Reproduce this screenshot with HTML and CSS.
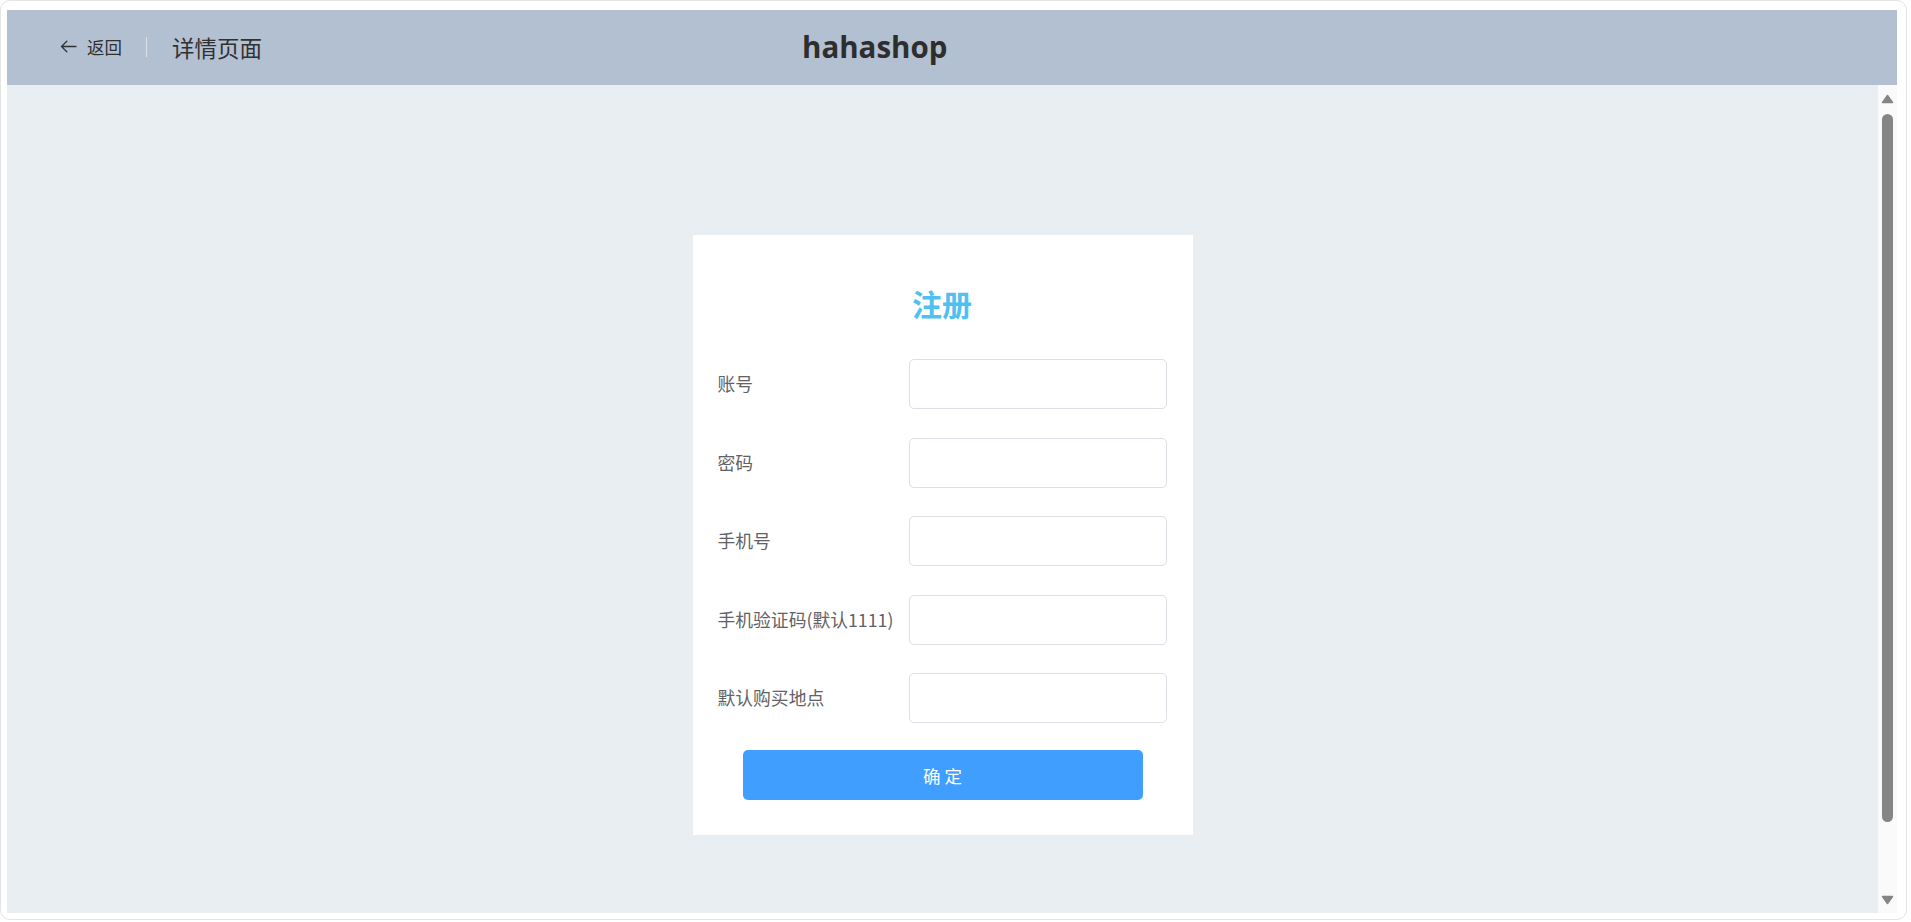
FILE: index.html
```html
<!DOCTYPE html>
<html lang="zh-CN">
<head>
<meta charset="utf-8">
<title>hahashop - 注册</title>
<link rel="stylesheet" href="styles.css">
</head>
<body>
<div class="frame">
  <div class="app">
    <header class="topbar">
      <div class="page-header">
        <div class="back">
          <svg class="back-icon" width="17" height="13" viewBox="0 0 17 13" aria-hidden="true">
            <path d="M16 6.5H1.5M6.8 1.2L1.5 6.5l5.3 5.3" fill="none" stroke="#303133" stroke-width="1.3" stroke-linecap="round" stroke-linejoin="round"/>
          </svg>
          <span class="back-text">返回</span>
        </div>
        <div class="page-title">详情页面</div>
      </div>
      <h1 class="brand">hahashop</h1>
    </header>
    <div class="body">
      <main class="main">
        <section class="card">
          <h2 class="card-title">注册</h2>
          <form class="form">
            <div class="form-item">
              <label class="form-label">账号</label>
              <input class="form-input" type="text">
            </div>
            <div class="form-item">
              <label class="form-label">密码</label>
              <input class="form-input" type="password">
            </div>
            <div class="form-item">
              <label class="form-label">手机号</label>
              <input class="form-input" type="text">
            </div>
            <div class="form-item">
              <label class="form-label">手机验证码(默认1111)</label>
              <input class="form-input" type="text">
            </div>
            <div class="form-item">
              <label class="form-label">默认购买地点</label>
              <input class="form-input" type="text">
            </div>
            <button class="submit" type="button">确 定</button>
          </form>
        </section>
      </main>
      <div class="scrollbar" aria-hidden="true">
        <div class="sb-btn sb-up">
          <svg width="13" height="10" viewBox="0 0 13 10"><path d="M6.5 1.5L11.5 8.5H1.5Z" fill="#858585" stroke="#858585" stroke-width="1.5" stroke-linejoin="round"/></svg>
        </div>
        <div class="sb-track">
          <div class="sb-thumb"></div>
        </div>
        <div class="sb-btn sb-down">
          <svg width="13" height="10" viewBox="0 0 13 10"><path d="M6.5 8.5L11.5 1.5H1.5Z" fill="#858585" stroke="#858585" stroke-width="1.5" stroke-linejoin="round"/></svg>
        </div>
      </div>
    </div>
  </div>
</div>
</body>
</html>
```

FILE: styles.css
```css
* {
  box-sizing: border-box;
}

html, body {
  margin: 0;
  padding: 0;
  background: #ffffff;
  font-family: "Noto Sans CJK SC", "Noto Sans", sans-serif;
}

.frame {
  width: 1907px;
  height: 920px;
  border: 1px solid #e4e4e4;
  border-radius: 10px;
  padding: 9px 9px 6px 6px;
  overflow: hidden;
}

.app {
  width: 1890px;
  height: 903px;
  display: flex;
  flex-direction: column;
}

.topbar {
  height: 75px;
  flex: none;
  background: #b3c0d1;
  display: flex;
  align-items: center;
  padding-left: 53px;
}

.page-header {
  display: flex;
  align-items: center;
  margin-top: -2px;
}

.back {
  display: flex;
  align-items: center;
  margin-right: 50px;
  position: relative;
  color: #303133;
}

.back::after {
  content: "";
  position: absolute;
  right: -25px;
  top: 50%;
  width: 1px;
  height: 20px;
  margin-top: -10px;
  background: #dcdfe6;
}

.back-icon {
  display: block;
  margin-right: 10px;
}

.back-text {
  font-size: 17.5px;
  line-height: 24px;
}

.page-title {
  font-size: 22.5px;
  line-height: 30px;
  color: #303133;
}

.brand {
  margin: -2px 0 0 540px;
  font-family: "Open Sans", "Noto Sans", sans-serif;
  font-weight: 700;
  font-size: 29.5px;
  line-height: 40px;
  color: #2e2e2e;
}

.body {
  flex: 1;
  display: flex;
  min-height: 0;
  background: #e9eef3;
}

.main {
  flex: 1;
  overflow: hidden;
  padding-top: 150px;
}

.card {
  width: 500px;
  height: 600px;
  margin: 0 auto;
  background: #ffffff;
  padding: 48px 26px 35px 25px;
}

.card-title {
  margin: 0 0 36px;
  text-align: center;
  font-size: 30px;
  line-height: 40px;
  font-weight: 700;
  color: #4fc1f0;
}

.form {
  display: flex;
  flex-direction: column;
}

.form-item {
  display: flex;
  align-items: center;
  height: 50px;
  margin-bottom: 28.5px;
}

.form-item:last-of-type {
  margin-bottom: 27px;
}

.form-label {
  width: 191px;
  flex: none;
  font-size: 17.8px;
  line-height: 24px;
  margin-top: -2px;
  color: #606266;
  white-space: nowrap;
}

.form-input {
  flex: 1;
  min-width: 0;
  width: 0;
  height: 50px;
  border: 1px solid #dcdfe6;
  border-radius: 5px;
  background: #ffffff;
  font-size: 17.5px;
  padding: 0 19px;
  outline: none;
}

.submit {
  align-self: center;
  margin-left: 1px;
  width: 400px;
  height: 50px;
  border: none;
  border-radius: 5px;
  background: #409eff;
  color: #ffffff;
  font-family: inherit;
  font-size: 17.5px;
  cursor: pointer;
}

.scrollbar {
  width: 19px;
  flex: none;
  background: #fafafa;
  display: flex;
  flex-direction: column;
  padding-right: 1px;
}

.sb-btn {
  display: flex;
  justify-content: center;
  flex: none;
}

.sb-up {
  height: 29px;
  align-items: center;
  padding-bottom: 1px;
}

.sb-down {
  height: 27px;
  align-items: center;
}

.sb-btn svg {
  display: block;
}

.sb-track {
  flex: 1;
  display: flex;
  justify-content: center;
}

.sb-thumb {
  width: 11px;
  height: 708px;
  border-radius: 6px;
  background: #858585;
}
```
